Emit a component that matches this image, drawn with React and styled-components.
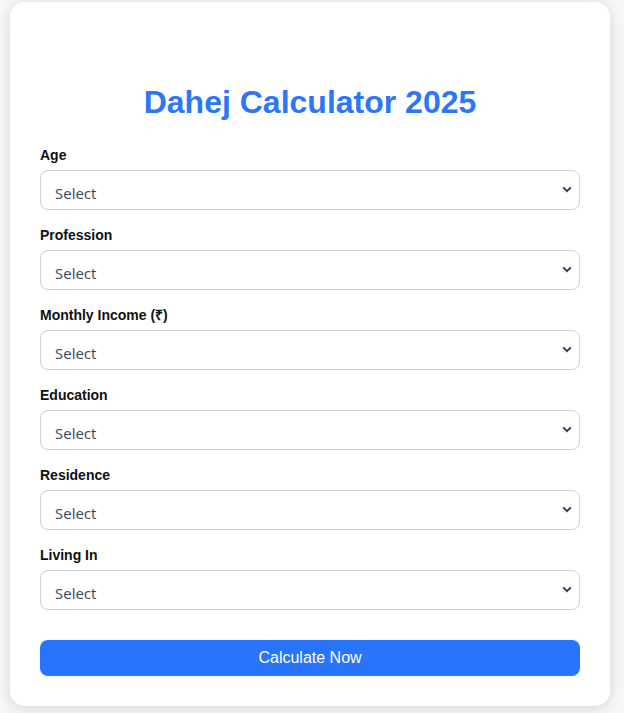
import React from "react";
import styled, { createGlobalStyle } from "styled-components";

const Global = createGlobalStyle`
  html, body { margin: 0; padding: 0; background: #f7f7f7; }
  body { font-family: "Liberation Sans", Arial, sans-serif; }
  * { box-sizing: border-box; }
`;

const Page = styled.div`
  padding: 2px 14px 7px 10px;
`;

const Card = styled.div`
  background: #fff;
  border-radius: 15px;
  box-shadow: 0 2px 14px rgba(0, 0, 0, 0.14);
  padding: 30px 30px 30px;
  width: 600px;
`;

const Title = styled.h1`
  margin: 52px 0 27px;
  text-align: center;
  color: #2b76f9;
  font-size: 32px;
  line-height: 36px;
  font-weight: 700;
`;

const Field = styled.div`
  display: flex;
  flex-direction: column;
  margin-bottom: ${(p) => (p.$last ? "30px" : "17px")};
`;

const Label = styled.label`
  font-size: 14px;
  line-height: 16px;
  font-weight: 700;
  color: #111;
  margin-bottom: 7px;
`;

const SelectWrap = styled.div`
  position: relative;
  height: 40px;
`;

const Select = styled.select`
  appearance: none;
  width: 100%;
  height: 40px;
  border: 1px solid #cfcfd6;
  border-radius: 8px;
  background: #fff;
  padding: 5px 30px 0 14px;
  font-family: "Open Sans", "Noto Sans", sans-serif;
  font-size: 15px;
  color: #3a4658;
  outline: none;
`;

const Chevron = styled.svg`
  position: absolute;
  right: 8px;
  top: 16px;
  width: 10px;
  height: 7px;
  pointer-events: none;
`;

const Button = styled.button`
  display: block;
  width: 100%;
  height: 36px;
  border: none;
  border-radius: 8px;
  background: #2874fc;
  color: #fff;
  font-family: "Liberation Sans", Arial, sans-serif;
  font-size: 16px;
  cursor: pointer;
`;

const fields = ["Age", "Profession", "Monthly Income (₹)", "Education", "Residence", "Living In"];

export default function App() {
  return (
    <>
      <Global />
      <Page>
        <Card>
          <Title>Dahej Calculator 2025</Title>
          {fields.map((f, i) => (
            <Field key={f} $last={i === fields.length - 1}>
              <Label>{f}</Label>
              <SelectWrap>
                <Select defaultValue="">
                  <option value="">Select</option>
                </Select>
                <Chevron viewBox="0 0 10 7">
                  <path d="M1.2 1.4 L5 5.2 L8.8 1.4" fill="none" stroke="#333a56" strokeWidth="2" />
                </Chevron>
              </SelectWrap>
            </Field>
          ))}
          <Button>Calculate Now</Button>
        </Card>
      </Page>
    </>
  );
}
